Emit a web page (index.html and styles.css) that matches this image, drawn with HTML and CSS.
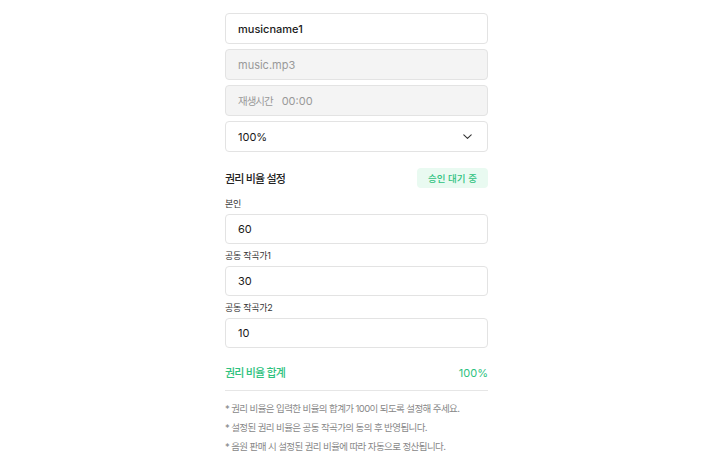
FILE: index.html
```html
<!DOCTYPE html>
<html lang="ko">
<head>
<meta charset="utf-8">
<link rel="stylesheet" href="styles.css">
</head>
<body>
<div class="form">
  <div class="field name">musicname1</div>
  <div class="field disabled">music.mp3</div>
  <div class="field disabled"><span class="dur-label">재생시간</span>00:00</div>
  <div class="field select">
    <span>100%</span>
    <svg class="chev" width="9" height="5" viewBox="0 0 9 5"><path d="M0.8 0.8l3.7 3.5 3.7-3.5" fill="none" stroke="#333" stroke-width="1.1" stroke-linecap="round" stroke-linejoin="round"/></svg>
  </div>

  <div class="section-head">
    <span class="title">권리 비율 설정</span>
    <span class="badge">승인 대기 중</span>
  </div>

  <div class="label first">본인</div>
  <div class="field share">60</div>
  <div class="label">공동 작곡가1</div>
  <div class="field share">30</div>
  <div class="label">공동 작곡가2</div>
  <div class="field share">10</div>

  <div class="sum">
    <span class="sum-label">권리 비율 합계</span>
    <span>100%</span>
  </div>

  <ul class="notes">
    <li>* 권리 비율은 입력한 비율의 합계가 100이 되도록 설정해 주세요.</li>
    <li>* 설정된 권리 비율은 공동 작곡가의 동의 후 반영됩니다.</li>
    <li>* 음원 판매 시 설정된 권리 비율에 따라 자동으로 정산됩니다.</li>
  </ul>
</div>
</body>
</html>
```

FILE: styles.css
```css
* { box-sizing: border-box; }
body {
  margin: 0;
  background: #fff;
  font-family: "Inter", "Noto Sans CJK KR", sans-serif;
  color: #222;
}
.form {
  width: 263px;
  margin: 0 auto;
  padding-top: 13px;
  display: flex;
  flex-direction: column;
}
.field {
  height: 31px;
  border: 1px solid #e3e3e3;
  border-radius: 4px;
  padding: 0 12px;
  display: flex;
  align-items: center;
  font-size: 11px;
  font-weight: 400;
  color: #1a1a1a;
  background: #fff;
}
.field.name { font-weight: 500; }
.field.share { height: 30px; }
.field + .field { margin-top: 5px; }
.field.disabled {
  background: #f4f4f4;
  color: #999;
}
.dur-label { margin-right: 9px; font-size: 10.5px; letter-spacing: -1px; }
.select { justify-content: space-between; }
.chev { margin-right: 3px; }
.section-head {
  margin-top: 16px;
  height: 20px;
  display: flex;
  align-items: center;
  justify-content: space-between;
}
.title {
  font-size: 11px;
  letter-spacing: -0.8px;
  font-weight: 500;
  color: #222;
}
.badge {
  width: 71px;
  height: 20px;
  border-radius: 4px;
  background: #e9faf1;
  color: #2ec27e;
  font-size: 9.5px;
  font-weight: 500;
  display: flex;
  align-items: center;
  justify-content: center;
}
.label {
  font-size: 9px;
  letter-spacing: -0.3px;
  line-height: 14px;
  color: #333;
  margin-top: 5px;
  margin-bottom: 3px;
}
.label.first { margin-top: 9px; }
.sum {
  margin-top: 17px;
  display: flex;
  justify-content: space-between;
  font-size: 11px;
  line-height: 17px;
  color: #2ec27e;
  font-weight: 400;
  padding-bottom: 8px;
  border-bottom: 1px solid #e6e6e6;
}
.sum-label {
  letter-spacing: -0.8px;
  font-weight: 500;
}
.notes {
  list-style: none;
  margin: 8px 0 0;
  padding: 0;
  font-size: 9.5px;
  letter-spacing: -0.6px;
  line-height: 19px;
  color: #888;
}
```
